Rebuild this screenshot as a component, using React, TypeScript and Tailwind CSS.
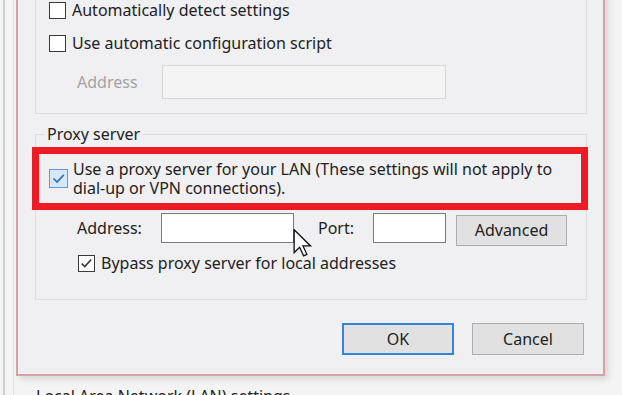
import React from "react";

type BoxKind = "empty" | "checked" | "focused";

const CheckBox = ({ kind }: { kind: BoxKind }) => {
  if (kind === "focused") {
    return (
      <span className="flex h-[19px] w-[19px] shrink-0 items-center justify-center border border-[#5b9de0] bg-[#d6e8f8]">
        <svg width="15" height="15" viewBox="0 0 15 15">
          <path d="M2.5 7.5l3.5 3.5 6.8-7.2" fill="none" stroke="#2f70c2" strokeWidth="1.7" />
        </svg>
      </span>
    );
  }
  return (
    <span className="flex h-[17px] w-[17px] shrink-0 items-center justify-center border border-[#3a3a3a] bg-white">
      {kind === "checked" && (
        <svg width="13" height="13" viewBox="0 0 13 13">
          <path d="M1.8 6.6l3 3 6.4-7" fill="none" stroke="#333" strokeWidth="1.5" />
        </svg>
      )}
    </span>
  );
};

const Button = ({ label, primary, className }: { label: string; primary?: boolean; className?: string }) => (
  <div
    className={
      "flex items-center justify-center bg-[#e1e1e1] " +
      (primary ? "border-2 border-[#2f86dc] " : "border border-[#adadad] ") +
      (className ?? "")
    }
  >
    {label}
  </div>
);

export default function App() {
  return (
    <div className="relative flex h-[395px] w-[622px] overflow-hidden bg-[#f4f4f4] font-['Noto_Sans',sans-serif] text-[16px] leading-[19px] text-[#222]">
      {/* window behind the dialog */}
      <div className="flex w-[16px] shrink-0">
        <div className="ml-[3px] w-[2px] bg-[#cfcfcf]" />
        <div className="ml-[8px] w-px bg-[#e3e3e3]" />
      </div>

      <div className="flex w-[589px] shrink-0 flex-col">
        <div className="-mt-[60px] flex h-[436px] shrink-0 flex-col border-2 border-[#d4a3aa] bg-[#f0eff2] pt-[38px] shadow-[3px_3px_7px_rgba(0,0,0,0.13)]">
          {/* Automatic configuration (its caption is above the visible area) */}
          <div className="ml-[17px] w-[552px] border border-[#dcdcdc] pb-[14px] pl-[13px] pt-[21px]">
            <div className="flex h-[17px] items-center gap-[6px]">
              <CheckBox kind="empty" />
              <span className="whitespace-nowrap">Automatically detect settings</span>
            </div>
            <div className="mt-[16px] flex h-[17px] items-center gap-[6px]">
              <CheckBox kind="empty" />
              <span className="whitespace-nowrap">Use automatic configuration script</span>
            </div>
            <div className="mt-[13px] flex items-center">
              <span className="ml-[28px] w-[85px] text-[#a3a3a3]">Address</span>
              <div className="h-[34px] w-[284px] border border-[#d6d6d6] bg-[#f4f4f5]" />
            </div>
          </div>

          {/* Proxy server */}
          <div className="relative ml-[17px] mt-[20px] w-[552px] border border-[#dcdcdc] pb-[27px] pt-[12px]">
            <span className="absolute left-[8px] top-[-11px] bg-[#f0eff2] px-[3px] leading-[20px]">Proxy server</span>
            <div className="-ml-[4px] flex h-[63px] w-[556px] items-center gap-[5px] border-[7px] border-[#ed1c24] pl-[10px]">
              <CheckBox kind="focused" />
              <div className="flex flex-col whitespace-nowrap">
                <span className="h-[19px]">Use a proxy server for your LAN (These settings will not apply to</span>
                <span className="h-[19px]">dial-up or VPN connections).</span>
              </div>
            </div>
            <div className="mt-[3px] flex items-start">
              <span className="ml-[41px] w-[84px] leading-[30px]">Address:</span>
              <div className="h-[30px] w-[133px] border border-[#7a7a7a] bg-white" />
              <span className="ml-[24px] w-[55px] leading-[30px]">Port:</span>
              <div className="h-[30px] w-[73px] border border-[#7a7a7a] bg-white" />
              <Button label="Advanced" className="ml-[10px] mt-[2px] h-[31px] w-[111px]" />
            </div>
            <div className="ml-[42px] mt-[9px] flex h-[17px] items-center gap-[6px]">
              <CheckBox kind="checked" />
              <span className="whitespace-nowrap">Bypass proxy server for local addresses</span>
            </div>
          </div>

          <div className="ml-[17px] mt-[23px] flex w-[552px] justify-end gap-[18px] pr-[3px]">
            <Button label="OK" primary className="h-[32px] w-[112px]" />
            <Button label="Cancel" className="h-[32px] w-[112px]" />
          </div>
        </div>

        <div className="ml-[20px] mt-[11px] whitespace-nowrap">Local Area Network (LAN) settings</div>
      </div>

      <div className="flex-1" />

      {/* mouse pointer */}
      <svg className="absolute left-[293px] top-[229px]" width="20" height="28" viewBox="0 0 13 19">
        <path
          d="M0.5 0.5 L0.5 16 L4.2 12.4 L6.9 18.2 L9.1 17.2 L6.5 11.5 L11.6 11.5 Z"
          fill="#fff"
          stroke="#111"
          strokeWidth="0.9"
          strokeLinejoin="miter"
        />
      </svg>
    </div>
  );
}
